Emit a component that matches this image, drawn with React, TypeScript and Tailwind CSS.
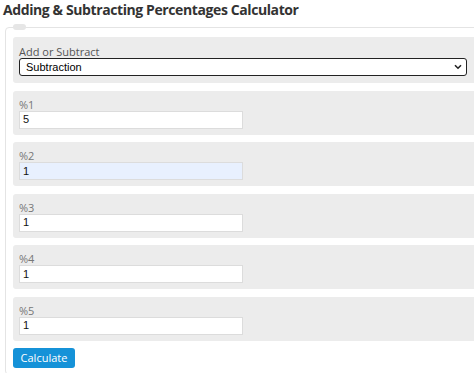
import React from 'react';

const fields = [
  { label: '%1', value: '5', autofill: false },
  { label: '%2', value: '1', autofill: true },
  { label: '%3', value: '1', autofill: false },
  { label: '%4', value: '1', autofill: false },
  { label: '%5', value: '1', autofill: false },
];

export default function App() {
  return (
    <div className="w-[474px] h-[373px] overflow-hidden bg-white font-['Open_Sans',sans-serif]">
      <h1 className="pl-[3px] pt-[1px] text-[14px] leading-[18px] font-bold tracking-[-0.4px] text-[#333]">
        Adding &amp; Subtracting Percentages Calculator
      </h1>

      <div className="relative ml-[5px] mt-[8px] w-[490px] border border-[#e4e4e4] rounded-[4px] pl-[7px] pt-[9px] pb-[6px]">
        {/* legend pill */}
        <div className="absolute left-[7px] top-[-4px] w-[13px] h-[6px] rounded-full bg-[#e6e6e6]" />

        <div className="flex flex-col gap-[7.5px]">
          {/* operation */}
          <div className="bg-[#ececec] rounded-[3px] pl-[6px] pt-[8px] pb-[7px] h-[46px]">
            <div className="text-[11px] leading-[13px] text-[#555]">Add or Subtract</div>
            <div className="relative w-[448px] h-[18px] border-[1.5px] border-[#222] rounded-[3px] bg-white">
              <span className="absolute left-[6px] top-[1px] text-[11px] leading-[14px] text-black font-['Liberation_Sans',sans-serif]">
                Subtraction
              </span>
              <svg className="absolute right-[4px] top-[5px]" width="8" height="6" viewBox="0 0 8 6">
                <path d="M1 1.2 L4 4.2 L7 1.2" fill="none" stroke="#222" strokeWidth="1.6" />
              </svg>
            </div>
          </div>

          {fields.map((f) => (
            <div key={f.label} className="bg-[#ececec] rounded-[3px] pl-[6px] pt-[7px] h-[44px]">
              <div className="text-[11px] leading-[13px] text-[#777]">{f.label}</div>
              <div
                className={
                  'w-[224px] h-[18px] border border-[#dcdcdc] flex items-center pl-[3px] text-[11px] text-[#111] font-["Liberation_Sans",sans-serif] ' +
                  (f.autofill ? 'bg-[#e8f0fe]' : 'bg-white')
                }
              >
                {f.value}
              </div>
            </div>
          ))}

          <div className="flex">
            <button className="w-[62px] h-[20px] rounded-[3px] bg-[#1592d8] text-white text-[11px] leading-[20px]">
              Calculate
            </button>
          </div>
        </div>
      </div>
    </div>
  );
}
